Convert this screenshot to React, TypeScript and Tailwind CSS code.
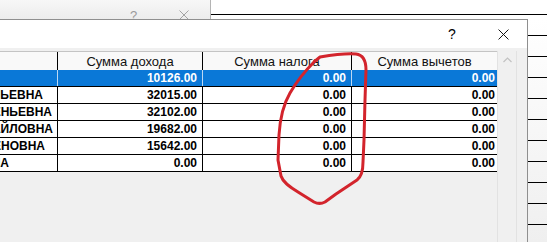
import React from 'react';

type Row = { name: string; nameEnd: number; income: string; tax: string; deduction: string; selected?: boolean };

const rows: Row[] = [
  { name: '', nameEnd: 0, income: '10126.00', tax: '0.00', deduction: '0.00', selected: true },
  { name: 'ЕВГЕНЬЕВНА', nameEnd: 43, income: '32015.00', tax: '0.00', deduction: '0.00' },
  { name: 'ЕВГЕНЬЕВНА', nameEnd: 52, income: '32102.00', tax: '0.00', deduction: '0.00' },
  { name: 'МИХАЙЛОВНА', nameEnd: 53, income: '19682.00', tax: '0.00', deduction: '0.00' },
  { name: 'СЕМЕНОВНА', nameEnd: 45, income: '15642.00', tax: '0.00', deduction: '0.00' },
  { name: 'ИВАНОВНА', nameEnd: 9, income: '0.00', tax: '0.00', deduction: '0.00' },
];

function CloseIcon({ color, size = 10 }: { color: string; size?: number }) {
  return (
    <svg width={size} height={size} viewBox="0 0 10 10" className="shrink-0">
      <path d="M0.5 0.5 L9.5 9.5 M9.5 0.5 L0.5 9.5" stroke={color} strokeWidth="0.9" fill="none" />
    </svg>
  );
}

function GridRow({ row }: { row: Row }) {
  const sel = row.selected;
  const cell = sel
    ? 'h-full border-r border-[#bcd8f3] flex items-center justify-end pr-[5px]'
    : 'h-full border-r border-black flex items-center justify-end pr-[5px]';
  return (
    <div
      className={
        'flex h-[17px] border-b border-black font-bold text-[12px] leading-none ' +
        (sel ? 'bg-[#0a78d7] text-white' : 'bg-white text-black')
      }
    >
      <div className={'w-[58px] h-full overflow-hidden border-r ' + (sel ? 'border-[#bcd8f3]' : 'border-black')}>
        {row.name && (
          <div className="h-full flex items-center justify-end whitespace-nowrap" style={{ width: row.nameEnd }}>
            {row.name}
          </div>
        )}
      </div>
      <div className={'w-[145px] ' + cell}>{row.income}</div>
      <div className={'w-[149px] ' + cell}>{row.tax}</div>
      <div className="w-[145px] h-full flex items-center justify-end pr-[2px]">{row.deduction}</div>
    </div>
  );
}

export default function App() {
  return (
    <div className="relative w-[547px] h-[242px] overflow-hidden bg-white font-['Liberation_Sans',Arial,sans-serif] text-black">
      {/* window behind */}
      <div className="flex h-[19px]">
        <div className="w-[211px] h-full bg-gradient-to-b from-[#f7f7f7] to-[#ececec] border-r border-[#b4b4b4] overflow-hidden flex items-start pt-[9px]">
          <span className="ml-[130px] text-[13px] leading-none text-[#9a9a9a]">?</span>
          <span className="ml-[42px] mt-[1px]">
            <CloseIcon color="#9a9a9a" />
          </span>
        </div>
        <div className="flex-1 pt-[14px]">
          <div className="border-t border-black" />
        </div>
      </div>

      <div className="flex h-[223px]">
        {/* front dialog */}
        <div className="w-[528px] h-full border-t border-r border-[#8f8f8f] flex flex-col">
          <div className="h-[28px] bg-white flex items-center shrink-0">
            <span className="ml-[448px] text-[14px] leading-none">?</span>
            <span className="ml-[42px]">
              <CloseIcon color="#111" size={11} />
            </span>
          </div>
          <div className="flex-1 bg-[#f0f0f0] pt-[3px] flex">
            <div className="w-[497px] flex flex-col">
              <div className="flex h-[19px] bg-[#f9f9f9] border-t border-[#c4c4c4] text-[13px] leading-none text-[#111]">
                <div className="w-[58px] h-full border-r border-black" />
                <div className="w-[145px] h-full border-r border-black flex items-center justify-center">Сумма дохода</div>
                <div className="w-[149px] h-full border-r border-black flex items-center justify-center">Сумма налога</div>
                <div className="w-[145px] h-full flex items-center justify-center">Сумма вычетов</div>
              </div>
              {rows.map((r, i) => (
                <GridRow key={i} row={r} />
              ))}
            </div>
            <div className="w-[20px] border-l border-r border-[#e2e2e2] bg-[#f0f0f0] flex justify-center pt-[6px]">
              <svg width="9" height="6" viewBox="0 0 9 6">
                <path d="M0.5 5 L4.5 1 L8.5 5" stroke="#c2c2c2" strokeWidth="1.2" fill="none" />
              </svg>
            </div>
          </div>
        </div>

        {/* strip of the window behind */}
        <div className="flex-1 flex flex-col bg-gradient-to-b from-white to-[#efefef]">
          <div className="h-[17px] border-b border-black shrink-0" />
          {Array.from({ length: 9 }).map((_, i) => (
            <div key={i} className="h-[21px] border-b border-black shrink-0" />
          ))}
        </div>
      </div>

      {/* red hand-drawn mark */}
      <svg className="absolute left-0 top-0 pointer-events-none" width="547" height="242" viewBox="0 0 547 242">
        <path
          d="M320 57 C332 55 346 53 356 54 C364 55 366 62 366 70 L365 100 L364 140 L363 162 C363 172 361 177 357 180 L348 186 L336 194 L325 202 C321 204 318 204 314 202 L298 192 C288 186 283 182 281 176 L278 160 L279 135 C280 118 283 105 290 93 C297 81 306 70 314 62 Z"
          stroke="#d3242c"
          strokeWidth="3"
          fill="none"
          strokeLinejoin="round"
          strokeLinecap="round"
        />
      </svg>
    </div>
  );
}
